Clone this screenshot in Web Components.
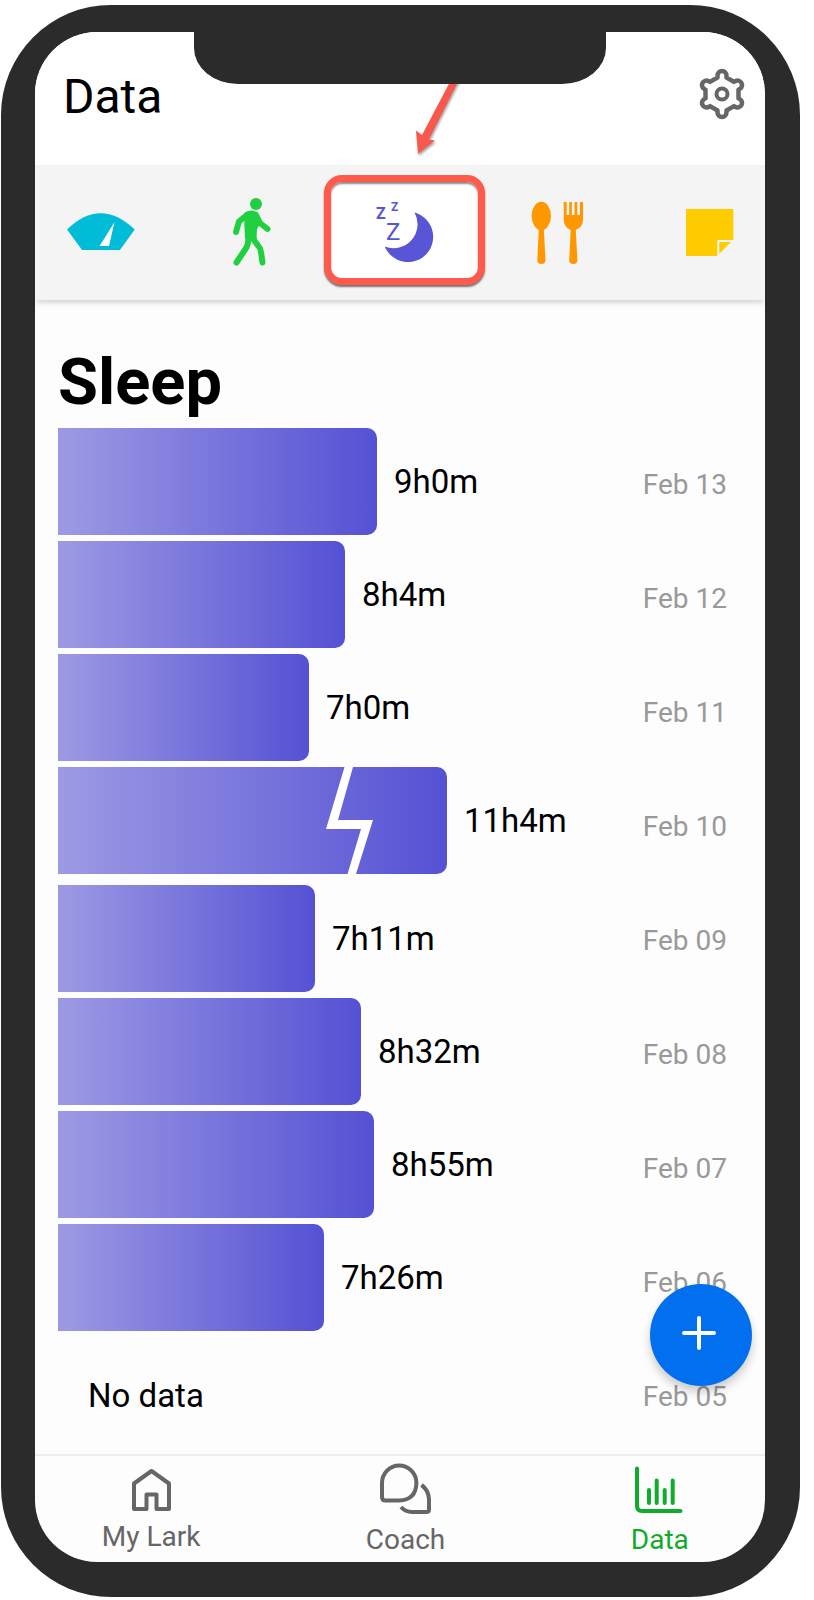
<!DOCTYPE html>
<html lang="en">
<head>
<meta charset="utf-8">
<meta name="viewport" content="width=device-width, initial-scale=1">
<title>Data</title>
<style>
    body {
        margin: 0;
        padding: 5px 14px 3px 1px;
        background: #fff;
        color: #000;
        font-family: Roboto, "Liberation Sans", sans-serif;
    }
</style>
</head>
<body>

<phone-frame>
    <page-header heading="Data"></page-header>

    <tab-strip>
        <metric-tab label="Weight">
            <svg viewBox="60 190 80 80" width="80" height="80">
                <path fill="#00bcd7" d="M67 229.500Q100.500 197 134.700 229.500L120 250H82Z"/>
                <path fill="#fff" d="M114.500 222L109 246H99.500Q106 236 114.500 222Z"/>
            </svg>
        </metric-tab>
        <metric-tab label="Activity">
            <svg viewBox="213 190 80 80" width="80" height="80">
                <circle cx="257" cy="204" r="6" fill="#20d040"/>
                <path fill="#20d040" d="M245 213Q252 208 259 213L261 224 258 229 257.500 239H246L245.500 228Z"/>
                <path fill="none" stroke="#20d040" stroke-width="6" stroke-linecap="round" stroke-linejoin="round"
                    d="M248 215L240 221.500 237 232M257 215L261 223 268.500 229M249.500 234Q250 244 246.500 249L237.500 262.500M253 234Q254 240 259 245.500 261.500 248 262 252L263.500 262.500"/>
            </svg>
        </metric-tab>
        <metric-tab label="Sleep" selected>
            <svg viewBox="364 190 80 80" width="80" height="80" fill="#5856d6">
                <path d="M414.500 212.500A25.200 25.200 0 1 1 384.700 246.500A24 24 0 0 0 414.500 212.500Z"/>
                <text x="376" y="219" font-size="16" font-weight="700">Z</text>
                <text x="391" y="211" font-size="12" font-weight="700">Z</text>
                <text x="386" y="240" font-size="24">Z</text>
            </svg>
        </metric-tab>
        <metric-tab label="Meals">
            <svg viewBox="517 190 80 80" width="80" height="80" fill="#ff9800">
                <ellipse cx="541.300" cy="216" rx="9.700" ry="14.300"/>
                <path d="M538.800 228H543.800L545.500 260A4 4 0 0 1 537.300 260Z"/>
                <path d="M563.700 202H566.700V215H569.200V202H571.900V215H574.500V202H577.300V215H579.900V202H583V220Q583 227 575.800 230L577.400 260A4 4 0 0 1 569.200 260L570.700 230Q563.700 227 563.700 220Z"/>
            </svg>
        </metric-tab>
        <metric-tab label="Notes">
            <svg viewBox="669 190 80 80" width="80" height="80" fill="#ffcc00">
                <path d="M686 209H733.300V240H717.300V256H686Z"/>
                <path d="M719.300 242H731L719.300 253.700Z"/>
            </svg>
        </metric-tab>
    </tab-strip>

    <sleep-chart heading="Sleep">
        <sleep-bar style="--size: 319">9h0m</sleep-bar>
        <sleep-bar style="--size: 287">8h4m</sleep-bar>
        <sleep-bar style="--size: 251">7h0m</sleep-bar>
        <sleep-bar style="--size: 389" broken>11h4m</sleep-bar>
        <sleep-bar style="--size: 257">7h11m</sleep-bar>
        <sleep-bar style="--size: 303">8h32m</sleep-bar>
        <sleep-bar style="--size: 316">8h55m</sleep-bar>
        <sleep-bar style="--size: 266">7h26m</sleep-bar>
        <sleep-bar empty>No data</sleep-bar>

        <day-label slot="days">Feb 13</day-label>
        <day-label slot="days">Feb 12</day-label>
        <day-label slot="days">Feb 11</day-label>
        <day-label slot="days">Feb 10</day-label>
        <day-label slot="days">Feb 09</day-label>
        <day-label slot="days">Feb 08</day-label>
        <day-label slot="days">Feb 07</day-label>
        <day-label slot="days">Feb 06</day-label>
        <day-label slot="days">Feb 05</day-label>
    </sleep-chart>

    <bottom-nav>
        <nav-item label="My Lark">
            <svg viewBox="125 1463 52 48" width="52" height="48" fill="none" stroke="currentColor" stroke-width="4" stroke-linejoin="round">
                <path d="M134 1483.500L151.500 1471 169 1483.500V1509H156.500V1494.500H146.500V1509H134Z"/>
            </svg>
        </nav-item>
        <nav-item label="Coach">
            <svg viewBox="379 1463 52 51" width="52" height="51" fill="none" stroke="currentColor" stroke-width="4" stroke-linecap="round" stroke-linejoin="round">
                <path d="M399 1500.500H385.500Q382 1500.500 382 1497V1483A17.200 17.500 0 0 1 416.400 1483Q416 1500 399 1500.500Z"/>
                <path stroke-linecap="butt" d="M421.500 1485Q428.500 1490 429 1499V1509.500Q429 1512 426 1512H412Q405.500 1512 401 1507"/>
            </svg>
        </nav-item>
        <nav-item label="Data" current>
            <svg viewBox="634 1463 52 51" width="52" height="51" fill="none" stroke="currentColor" stroke-width="4" stroke-linecap="round" stroke-linejoin="round">
                <path d="M637 1468.500V1506Q637 1511 642 1511H680.500M649 1490V1503M656.700 1480.500V1503M664.700 1490V1503M672.700 1480.500V1503"/>
            </svg>
        </nav-item>
    </bottom-nav>
</phone-frame>

<script>
function def(name, html) {
    const template = document.createElement('template')
    template.innerHTML = html

    customElements.define(name, class extends HTMLElement {

        constructor() {
            super()

            this.attachShadow({ mode: 'open' }).append(template.content.cloneNode(true))
        }

        connectedCallback() {
            // data-attr="label" copies the host's label into the node's text,
            // data-aria="label" into its aria-label
            for (const node of this.shadowRoot.querySelectorAll('[data-attr]')) {
                node.textContent = this.getAttribute(node.dataset.attr) ?? ''
            }

            for (const node of this.shadowRoot.querySelectorAll('[data-aria]')) {
                node.setAttribute('aria-label', this.getAttribute(node.dataset.aria) ?? '')
            }
        }
    })
}

def('phone-frame', /*html*/`
    <style>
        :host {
            display: block;
            position: relative;
            box-sizing: border-box;
            padding: 27px 35px 35px 34px;
            border-radius: 110px;
            background: #2b2b2b;
        }

        .screen {
            overflow: hidden;
            border-radius: 62px;
            background: #fdfdfd;
        }

        .notch {
            position: absolute;
            z-index: 2;
            top: 26px;
            left: 50%;
            width: 412px;
            height: 53px;
            margin-left: -207px;
            border-radius: 0 0 44px 44px / 0 0 36px 36px;
            background: #2b2b2b;
        }
    </style>

    <div class="notch"></div>
    <main class="screen"><slot></slot></main>
`)

def('page-header', /*html*/`
    <style>
        :host {
            display: flex;
            position: relative;
            justify-content: space-between;
            align-items: flex-start;
            padding: 36px 17px 39px 28px;
            background: #fefefe;
        }

        h1 {
            margin: 0;
            font-size: 48px;
            font-weight: 400;
            line-height: 58px;
        }

        button {
            display: block;
            padding: 0;
            border: 0;
            background: none;
            color: #666;
        }

        svg {
            display: block;
        }

        /* pointer towards the selected tab */
        .pointer {
            position: absolute;
            top: 46px;
            left: 50%;
            filter: drop-shadow(1px 2px 1px #0005);
        }
    </style>

    <h1 data-attr="heading"></h1>
    <button type="button" aria-label="Settings">
        <svg viewBox="-26 -26 52 52" width="52" height="52" fill="none" stroke="currentColor" stroke-width="4.500" stroke-linejoin="round">
            <path d="M-4.500-16.500V-18.500A4.500 4.500 0 0 1 4.500-18.500V-16.500L12-12.100 13.800-13.100A4.500 4.500 0 0 1 18.300-5.400L16.500-4.400V4.400L18.300 5.400A4.500 4.500 0 0 1 13.800 13.100L12 12.100 4.500 16.500V18.500A4.500 4.500 0 0 1-4.500 18.500V16.500L-12 12.100-13.800 13.100A4.500 4.500 0 0 1-18.300 5.400L-16.500 4.400V-4.400L-18.300-5.400A4.500 4.500 0 0 1-13.800-13.100L-12-12.100Z"/>
            <circle r="5.500" stroke-width="4"/>
        </svg>
    </button>
    <svg class="pointer" viewBox="401 78 70 80" width="70" height="80" aria-hidden="true">
        <path fill="#f9594c" d="M453 78H461L430 139.500 436 140.500 419 154 417 130.500 423 135Z"/>
    </svg>
`)

def('tab-strip', /*html*/`
    <style>
        :host {
            display: block;
            position: relative;
            padding: 10px 0 15px;
            background: #f4f4f4;
            box-shadow: 0 4px 6px -2px #0003;
        }

        /* the strip runs past both edges of the screen */
        nav {
            display: grid;
            grid-template-columns: repeat(5, 1fr);
            margin: 0 -20px 0 -11px;
        }
    </style>

    <nav aria-label="Metrics"><slot></slot></nav>
`)

def('metric-tab', /*html*/`
    <style>
        :host {
            display: flex;
        }

        button {
            display: flex;
            flex: 1;
            justify-content: center;
            align-items: center;
            box-sizing: border-box;
            height: 110px;
            margin: 0 -4px;
            padding: 0;
            border: 7px solid transparent;
            border-radius: 18px;
            background: none;
            font: inherit;
        }

        :host([selected]) button {
            border-color: #ff5a4c;
            background: #fff;
            box-shadow: 0 2px 2px #0008, inset 0 2px 2px #0007;
        }
    </style>

    <button type="button" data-aria="label"><slot></slot></button>
`)

def('sleep-chart', /*html*/`
    <style>
        :host {
            display: block;
            position: relative;
            padding: 44px 38px 0 23px;
        }

        h2 {
            margin: 0 0 8px;
            font-size: 65px;
            font-weight: 700;
            line-height: 76px;
        }

        .columns {
            display: grid;
            grid-template-columns: 1fr 86px;
        }

        .bars {
            display: flex;
            flex-direction: column;
            gap: 6px;
        }

        .add {
            display: flex;
            position: absolute;
            right: 13px;
            bottom: 68px;
            justify-content: center;
            align-items: center;
            width: 102px;
            height: 102px;
            padding: 0 4px 4px 0;
            border: 0;
            border-radius: 50%;
            background: #0270ee;
            box-shadow: 0 6px 10px #0003;
        }
    </style>

    <h2 data-attr="heading"></h2>
    <div class="columns">
        <div class="bars"><slot></slot></div>
        <div><slot name="days"></slot></div>
    </div>
    <button class="add" type="button" aria-label="Add entry">
        <svg viewBox="0 0 34 34" width="34" height="34" stroke="#fff" stroke-width="4" stroke-linecap="round">
            <path d="M17 2V32M2 17H32"/>
        </svg>
    </button>
`)

def('sleep-bar', /*html*/`
    <style>
        :host {
            display: flex;
            align-items: center;
            gap: 17px;
            height: 107px;
            font-size: 33px;
            line-height: 40px;
            white-space: nowrap;
        }

        /* --size is a share of a full scale of 583 */
        .bar {
            display: flex;
            flex: none;
            justify-content: flex-end;
            box-sizing: border-box;
            width: calc(100% * var(--size) / 583);
            height: 100%;
            padding-right: 74px;
            border-radius: 0 10px 10px 0;
            background: linear-gradient(90deg, #9d9ae4, #5551d4);
        }

        /* zigzag across a bar that is longer than the scale */
        svg {
            display: none;
        }

        :host([broken]) svg {
            display: block;
        }

        :host([broken]) {
            margin-bottom: 5px;
        }

        :host([empty]) {
            margin-top: 5px;
            padding-left: 30px;
        }

        :host([empty]) .bar {
            display: none;
        }
    </style>

    <div class="bar">
        <svg viewBox="0 0 47 107" width="47" height="107" aria-hidden="true">
            <path fill="#fff" d="M18.500 0H27L12 53H47L30 107H21.500L35 62H0Z"/>
        </svg>
    </div>
    <span><slot></slot></span>
`)

def('day-label', /*html*/`
    <style>
        :host {
            display: flex;
            justify-content: flex-end;
            align-items: center;
            height: 114px;
            color: #999;
            font-size: 28px;
            line-height: 34px;
            white-space: nowrap;
        }
    </style>

    <slot></slot>
`)

def('bottom-nav', /*html*/`
    <style>
        :host {
            display: block;
            border-top: 2px solid #ececec;
        }

        nav {
            display: grid;
            grid-template-columns: repeat(3, 1fr);
            margin: 0 -22px 0 -11px;
            padding: 7px 0 5px;
        }
    </style>

    <nav aria-label="Main"><slot></slot></nav>
`)

def('nav-item', /*html*/`
    <style>
        :host {
            display: block;
        }

        a {
            display: flex;
            flex-direction: column;
            align-items: center;
            gap: 9px;
            color: #666;
            font-size: 28px;
            line-height: 34px;
            text-decoration: none;
        }

        :host([current]) a {
            color: #11ab2c;
        }
    </style>

    <a href="#"><slot></slot><span data-attr="label"></span></a>
`)
</script>
</body>
</html>
